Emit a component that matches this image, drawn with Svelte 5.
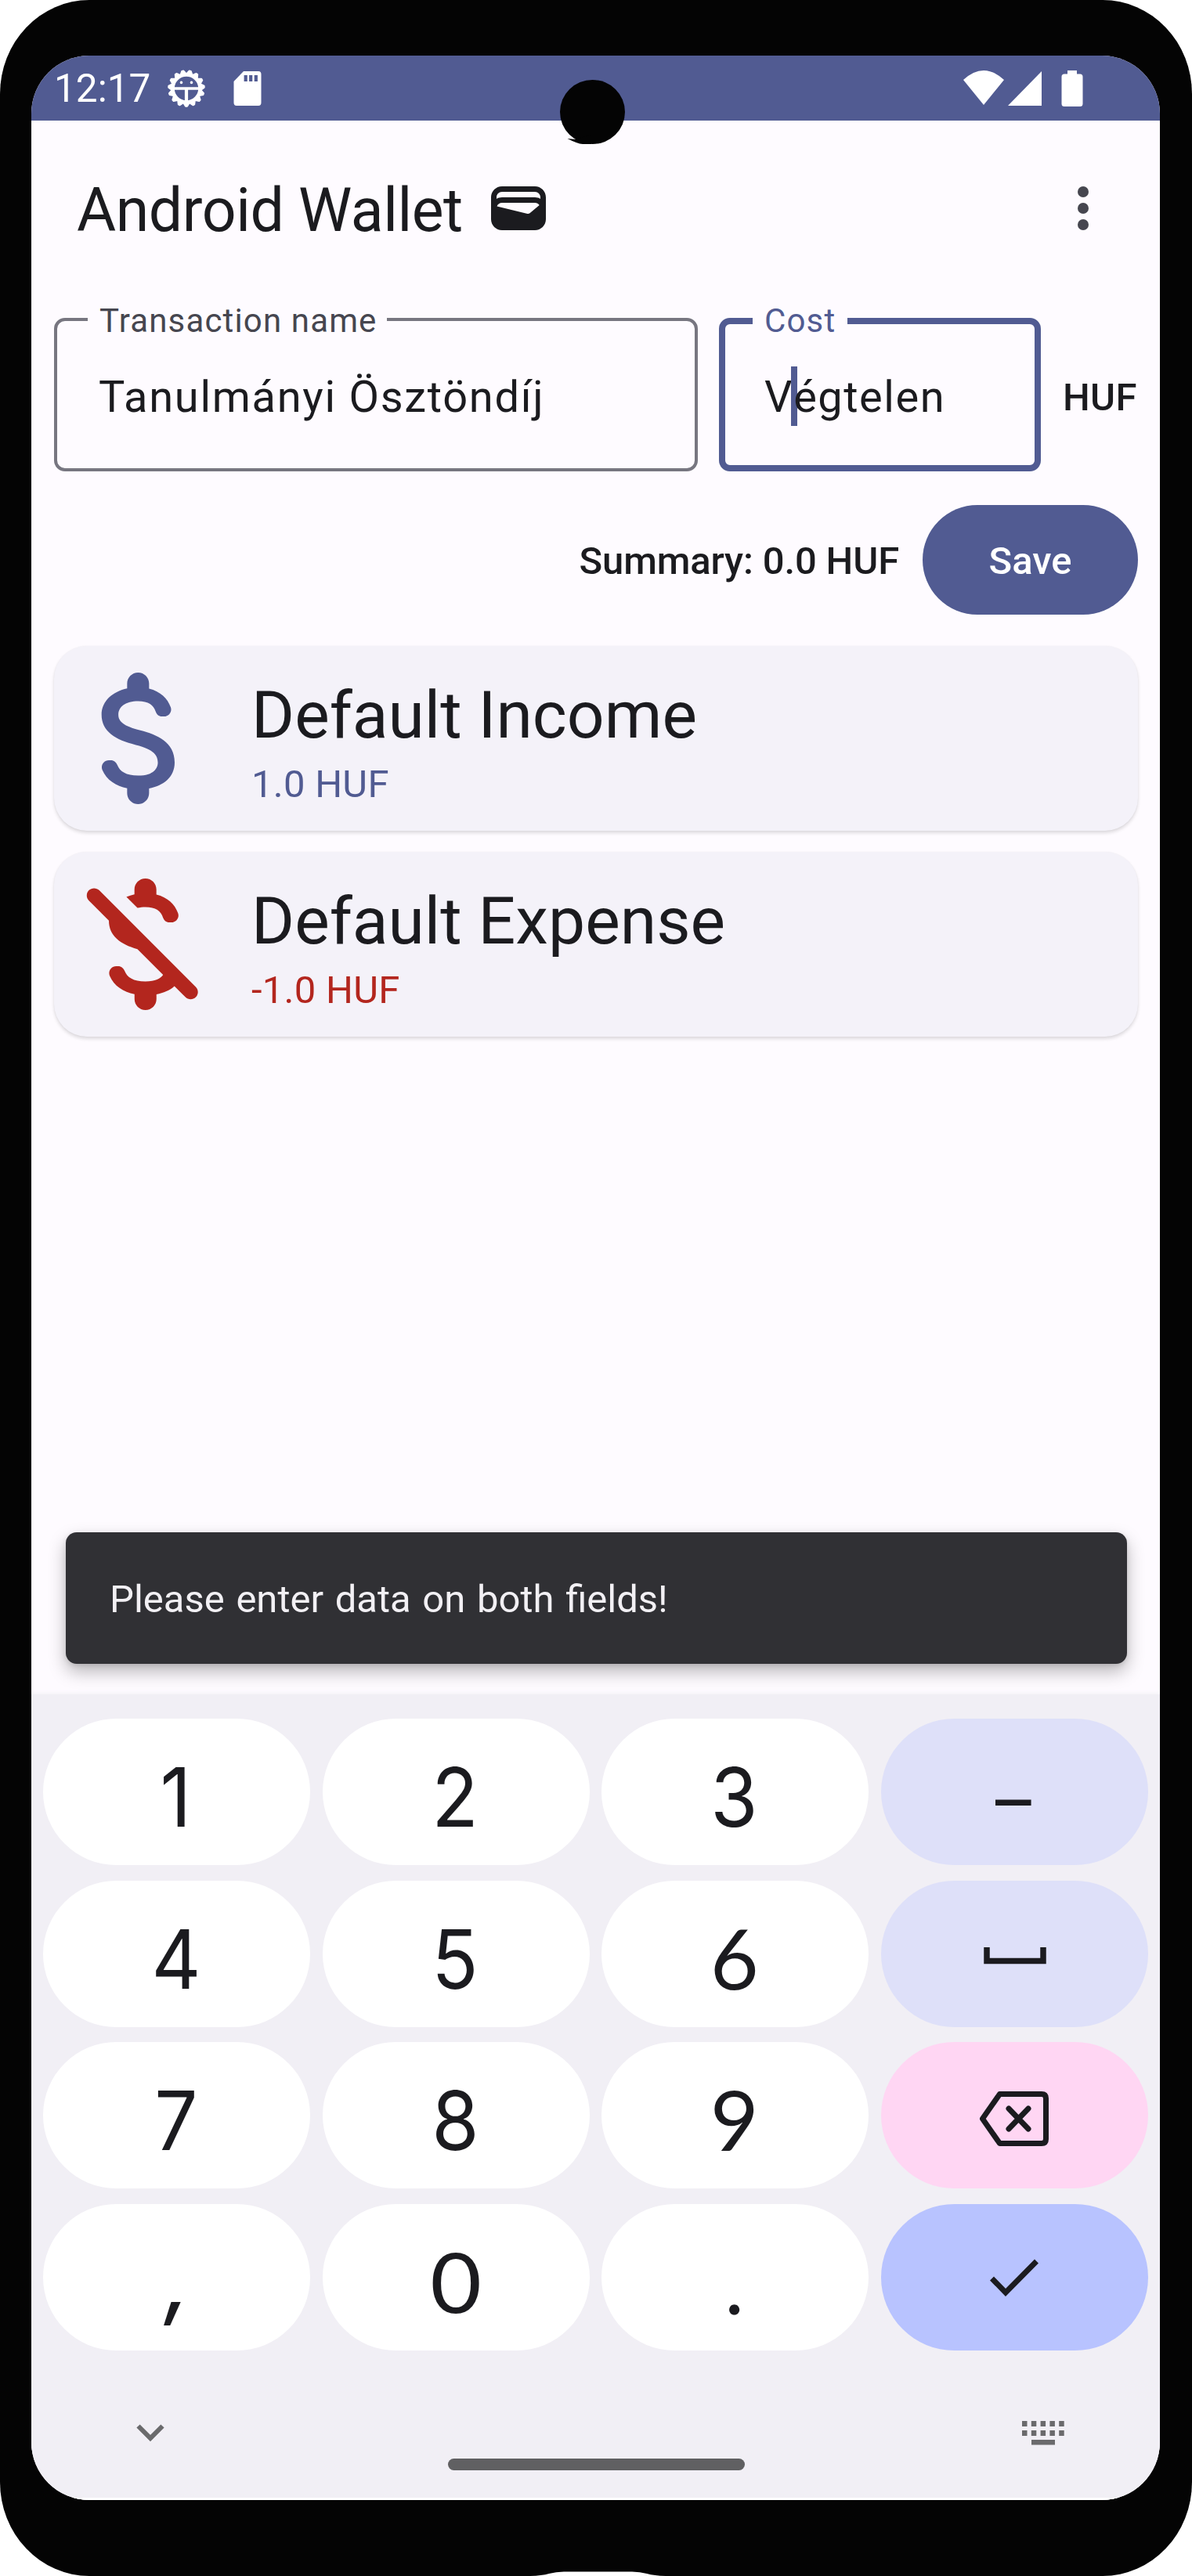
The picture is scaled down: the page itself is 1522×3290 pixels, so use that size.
<script lang="ts">
  const transactions = [
    { title: 'Default Income', amount: '1.0 HUF', kind: 'income' },
    { title: 'Default Expense', amount: '-1.0 HUF', kind: 'expense' },
  ];
  const keys = [
    { label: '1' }, { label: '2' }, { label: '3' }, { label: '–', tone: 'soft', face: 'dash' },
    { label: '4' }, { label: '5' }, { label: '6', face: 'humanist' }, { icon: 'space', tone: 'soft' },
    { label: '7' }, { label: '8' }, { label: '9', face: 'humanist' }, { icon: 'backspace', tone: 'pink' },
    { label: ',', face: 'comma' }, { label: '0', face: 'zero' }, { label: '.', face: 'point' }, { icon: 'check', tone: 'accent' },
  ];
  const teeth = Array.from({ length: 15 }, (_, i) => 180 + i * 24);
  const keyCols = [0, 1, 2, 3, 4];
</script>

<div class="phone">
  <div class="screen">
    <header class="status">
      <span class="clock">12:17</span>
      <svg class="debug" viewBox="-25 -25 50 50">
        {#each teeth as angle}
          <path d="M-3.6-18.5L-1-22.800H1L3.6-18.5Z" transform="rotate({angle})" fill="#fff" stroke="#fff" stroke-width="2" stroke-linejoin="round" />
        {/each}
        <circle r="17.4" fill="none" stroke="#fff" stroke-width="4.4" />
        <path d="M-16 0H16" stroke="#fff" stroke-width="3.4" />
        <path d="M0 0V17" stroke="#fff" stroke-width="4.2" />
        <circle cx="-6.5" cy="-7.6" r="1.8" fill="#fff" />
        <circle cx="6.5" cy="-7.6" r="1.8" fill="#fff" />
      </svg>
      <svg class="sd" viewBox="0 0 36 44">
        <path d="M13 0H32Q35.500 0 35.500 4V40Q35.500 44 32 44H4Q0.500 44 0.500 40V13Z" fill="#fff" />
        <path d="M15.700 5V13M22.200 5V13M28.800 5V13" stroke="#515b92" stroke-width="4.200" />
      </svg>
      <svg class="signals" viewBox="0 0 153 46">
        <path d="M0 12Q26-12 52 12L26 44Z M100 1V45H57Z" fill="#fff" />
        <path d="M133 0H145V4.500H149Q152.500 4.500 152.500 8V42.500Q152.500 46 149 46H129Q125.500 46 125.500 42.500V8Q125.500 4.500 129 4.500H133Z" fill="#fff" />
      </svg>
    </header>

    <div class="appbar">
      <h1>Android Wallet</h1>
      <svg class="wallet" viewBox="0 0 24 24" fill="#1b1b1f">
        <path fill-rule="evenodd" d="M18 4H6C3.790 4 2 5.790 2 8v8c0 2.210 1.790 4 4 4h12c2.210 0 4-1.790 4-4V8c0-2.210-1.790-4-4-4zm-1.860 9.770c-.24.2-.57.28-.88.2L4.150 11.250C4.450 10.520 5.160 10 6 10h12c.67 0 1.260.34 1.630.84l-3.490 2.930zM6 6h12c1.100 0 2 .9 2 2v.55c-.59-.34-1.270-.55-2-.55H6c-.73 0-1.410.21-2 .55V8c0-1.100.9-2 2-2z" />
      </svg>
      <svg class="more" viewBox="0 0 24 24" fill="#46464f">
        <circle cx="12" cy="6" r="2" /><circle cx="12" cy="12" r="2" /><circle cx="12" cy="18" r="2" />
      </svg>
    </div>

    <div class="form">
      <fieldset class="field name">
        <legend>Transaction name</legend>
        <span class="value">Tanulmányi Ösztöndíj</span>
      </fieldset>
      <fieldset class="field cost">
        <legend>Cost</legend>
        <span class="value">V<i class="caret"></i>égtelen</span>
      </fieldset>
      <span class="unit">HUF</span>
    </div>

    <div class="summary">
      <span>Summary: 0.0 HUF</span>
      <button class="save">Save</button>
    </div>

    <ul class="list">
      {#each transactions as t}
        <li class="card {t.kind}">
          <svg class="money" viewBox="0 0 24 24" fill="currentColor">
            {#if t.kind === 'income'}
              <path d="M11.800 10.900c-2.270-.59-3-1.200-3-2.150 0-1.090 1.010-1.850 2.700-1.850 1.420 0 2.130.54 2.390 1.400.12.4.45.7.87.7h.3c.66 0 1.130-.65.9-1.270-.42-1.180-1.400-2.160-2.960-2.540V4.500c0-.83-.67-1.500-1.500-1.500S10 3.670 10 4.500v.66c-1.940.42-3.500 1.680-3.500 3.610 0 2.310 1.910 3.460 4.700 4.130 2.500.6 3 1.480 3 2.410 0 .69-.49 1.790-2.700 1.790-1.650 0-2.500-.59-2.830-1.430-.15-.39-.49-.67-.9-.67h-.28c-.67 0-1.140.68-.89 1.300.57 1.390 1.900 2.210 3.400 2.530v.67c0 .83.67 1.500 1.500 1.500s1.500-.67 1.500-1.500v-.65c1.950-.37 3.500-1.500 3.500-3.550 0-2.840-2.430-3.810-4.700-4.400z" />
            {:else}
              <path d="M12.500 6.900c1.420 0 2.130.54 2.390 1.400.12.4.45.7.87.7h.3c.66 0 1.130-.65.9-1.270-.42-1.180-1.400-2.160-2.960-2.540V4.500c0-.83-.67-1.500-1.500-1.500S11 3.670 11 4.500v.66c-.39.08-.75.21-1.100.36l1.510 1.510c.32-.08.69-.13 1.090-.13zM4.770 4.620c-.39.39-.39 1.020 0 1.410L7.500 8.770c0 2.060 1.530 3.220 3.910 3.910l3.510 3.510c-.34.49-1.050.91-2.420.91-1.650 0-2.500-.59-2.830-1.430-.15-.39-.49-.67-.9-.67h-.27c-.67 0-1.140.68-.89 1.300.57 1.390 1.900 2.210 3.400 2.530v.67c0 .83.67 1.500 1.500 1.500s1.500-.67 1.500-1.500v-.65c.96-.18 1.830-.55 2.460-1.120l1.510 1.510c.39.39 1.020.39 1.410 0 .39-.39.39-1.020 0-1.410L6.180 4.620c-.39-.39-1.020-.39-1.410 0z" />
            {/if}
          </svg>
          <div class="text">
            <span class="title">{t.title}</span>
            <span class="amount">{t.amount}</span>
          </div>
        </li>
      {/each}
    </ul>

    <div class="snackbar">Please enter data on both fields!</div>

    <section class="keyboard">
      <div class="keys">
        {#each keys as key}
          <button class="key {key.tone ?? 'plain'}">
            {#if key.icon === 'space'}
              <svg class="i-space" viewBox="0 0 80 22"><path d="M4 0V17.500H76V0" fill="none" stroke="#1b1b1f" stroke-width="7.500" /></svg>
            {:else if key.icon === 'backspace'}
              <svg class="i-back" viewBox="0 0 90 70" fill="none" stroke="#1b1b1f" stroke-width="7" stroke-linejoin="round">
                <path d="M26.500 3.500H80Q85.500 3.500 85.500 9V61Q85.500 66.500 80 66.500H26.500L4.500 35Z" />
                <path d="M38 22L63 48M63 22L38 48" stroke-linecap="round" />
              </svg>
            {:else if key.icon === 'check'}
              <svg class="i-check" viewBox="0 0 62 48"><path d="M2.500 25L20 43L59.500 3" fill="none" stroke="#1b1b1f" stroke-width="7" /></svg>
            {:else}
              <span class="glyph {key.face ?? ''}">{key.label}</span>
            {/if}
          </button>
        {/each}
      </div>
      <div class="nav">
        <svg class="chevron" viewBox="0 0 36 23"><path d="M2.500 2.500L18 18L33.500 2.500" fill="none" stroke="#6a6a6c" stroke-width="6" /></svg>
        <div class="handle"></div>
        <svg class="switcher" viewBox="0 0 54 31" fill="#6a6a6c">
          {#each keyCols as c}
            <rect x={c * 11.8} y="0" width="6.500" height="7" />
            <rect x={c * 11.8} y="12" width="6.500" height="7" />
          {/each}
          <rect x="12" y="24" width="30" height="6.500" />
        </svg>
      </div>
    </section>
  </div>
  <svg class="camera" viewBox="0 0 83 82" fill="#040404">
    <ellipse cx="41.500" cy="41" rx="41.500" ry="41" />
    <path d="M9.500 75L20 76L40 70V82H29Q22 81.500 9.500 75Z" />
  </svg>
  <svg class="notch" viewBox="0 0 173 6"><path d="M0 6Q15 5.500 24 3Q33 0.500 43 0.500H130Q140 0.500 149 3Q158 5.500 173 6Z" fill="#fff" /></svg>
</div>

<style>
  :global(body) { background: #fff; }
  * { box-sizing: border-box; }
  .phone {
    position: relative;
    width: 1522px;
    height: 3290px;
    padding: 71px 41px 97px 40px;
    background: #040404;
    border-radius: 114px / 120px;
    font-family: Roboto, sans-serif;
    color: #1b1b1f;
    overflow: hidden;
  }
  .screen {
    height: 3122px;
    display: flex;
    flex-direction: column;
    background: #fefbff;
    border-radius: 74px;
    overflow: hidden;
  }
  .status {
    height: 83px;
    flex: none;
    display: flex;
    align-items: center;
    padding: 0 98px 0 29px;
    background: #515b92;
    color: #fff;
  }
  .clock { font-size: 49.5px; line-height: 60px; width: 144px; padding-top: 1px; white-space: nowrap; }
  .debug { width: 50px; height: 50px; }
  .sd { width: 36px; height: 44px; margin-left: 35px; }
  .signals { width: 153px; height: 46px; margin-left: auto; }

  .appbar { height: 224px; flex: none; display: flex; align-items: center; padding: 0 56px 0 58px; }
  h1 { margin: 5px 0 0; width: 500px; font-weight: 400; font-size: 77px; line-height: 98px; letter-spacing: -0.45px; white-space: nowrap; }
  .wallet { width: 84px; height: 84px; margin-left: 22px; }
  .more { width: 84px; height: 84px; margin-left: auto; }

  .form { height: 224px; flex: none; display: flex; align-items: flex-start; padding: 0 28px 0 29px; }
  .field {
    position: relative;
    min-width: 0;
    margin: 0;
    height: 224px;
    border: 4px solid #777680;
    border-radius: 14px;
    padding: 0;
  }
  .field legend {
    margin-left: 39px;
    padding: 4px 12px 0 15px;
    font-size: 42px;
    line-height: 56px;
    letter-spacing: 1.15px;
    color: #46464f;
  }
  .name { width: 822px; }
  .cost { width: 411px; margin-left: 27px; border: 8px solid #515b92; }
  .cost legend { margin-left: 35px; padding: 4px 15px 4px 15px; color: #515b92; }
  .value {
    display: flex;
    align-items: center;
    padding-left: 53px;
    margin-top: 27px;
    height: 84px;
    font-size: 56px;
    letter-spacing: 1.7px;
    white-space: nowrap;
  }
  .cost .value { padding-left: 50px; margin-top: 23px; letter-spacing: 1.5px; }
  .caret { width: 8px; height: 76px; margin: -3px -5px 0 -3px; background: #515b92; }
  .unit { margin: 101px 0 0 28px; font-size: 49px; line-height: 58px; font-weight: 500; letter-spacing: 0.35px; }

  .summary {
    display: flex;
    flex: none;
    align-items: center;
    justify-content: flex-end;
    height: 140px;
    margin-top: 43px;
    padding-right: 28px;
    font-size: 49px;
    font-weight: 500;
    letter-spacing: -0.15px;
  }
  .summary span { padding-top: 2px; }
  .save {
    width: 275px;
    height: 140px;
    margin-left: 30px;
    padding: 2px 0 0;
    border: 0;
    border-radius: 70px;
    background: #515b92;
    color: #fff;
    font: inherit;
    letter-spacing: 0;
  }

  .list { list-style: none; margin: 40px 28px 0 29px; padding: 0; display: grid; gap: 27px; flex: none; }
  .card {
    display: flex;
    align-items: center;
    gap: 28px;
    height: 236px;
    border-radius: 42px;
    background: #f4f2f9;
    box-shadow: 0 3px 4px rgba(0, 0, 0, 0.13), 0 0 2px rgba(0, 0, 0, 0.05);
    color: #515b92;
  }
  .expense { color: #b3261e; }
  .money { width: 224px; height: 224px; }
  .text { display: flex; flex-direction: column; padding-top: 9px; }
  .title { font-size: 84px; line-height: 112px; color: #1b1b1f; }
  .amount { font-size: 49px; line-height: 70px; letter-spacing: 0.25px; margin-top: -3px; }

  .snackbar {
    flex: none;
    margin: auto 42px 39px 44px;
    height: 168px;
    padding: 2px 56px 0;
    display: flex;
    align-items: center;
    border-radius: 14px;
    background: #303034;
    color: #f2f0f4;
    font-size: 49px;
    word-spacing: 2.500px;
    font-feature-settings: 'liga' 1;
    box-shadow: 0 10px 22px rgba(0, 0, 0, 0.28), 0 2px 6px rgba(0, 0, 0, 0.1);
  }

  .keyboard { flex: none; height: 1029px; background: #f1eff5; border-bottom: 3px solid #fff; box-shadow: 0 0 6px 1px #f1eff5; }
  .keys {
    display: grid;
    grid-template-columns: repeat(4, 341px);
    grid-auto-rows: 187px;
    column-gap: 15.600px;
    row-gap: 19.700px;
    padding: 31px 14px 0 15px;
  }
  .key {
    display: flex;
    align-items: center;
    justify-content: center;
    padding: 0;
    border: 0;
    border-radius: 94px;
    background: #fff;
    color: #1b1b1f;
  }
  .soft { background: #dee0f9; }
  .pink { background: #ffd6f3; }
  .accent { background: #b8c3ff; }
  .glyph { font: 400 105px/126px Inter, sans-serif; padding: 13px 2px 0 0; transform: scaleX(0.93); }
  .humanist { font-family: Lato, sans-serif; font-size: 107px; padding-top: 9px; transform: none; }
  .zero { font-family: Lato, sans-serif; font-size: 107px; padding: 9px 0 0; transform: scaleX(1.06); }
  .comma { font-style: italic; font-weight: 500; padding: 8px 0 0 2px; transform: none; }
  .point { font-family: Lato, sans-serif; transform: none; }
  .dash { font-size: 80px; font-weight: 500; padding-top: 19px; transform: scaleX(1.14); }
  .i-space { width: 80px; height: 22px; margin: 6px 0 0 2px; }
  .i-back { width: 90px; height: 70px; margin: 8px 1px 0 0; }
  .i-check { width: 62px; height: 48px; }

  .nav { display: flex; align-items: flex-start; padding: 90px 122px 0 134px; }
  .chevron { width: 36px; height: 23px; margin-top: 4px; }
  .handle { width: 379px; height: 15px; margin: 48px 0 0 362px; border-radius: 8px; background: #606062; }
  .switcher { width: 54px; height: 31px; margin-left: auto; }

  .camera { position: absolute; left: 715px; top: 102px; width: 83px; height: 82px; }
  .notch { position: absolute; left: 677px; bottom: 0; width: 173px; height: 6px; }
</style>
